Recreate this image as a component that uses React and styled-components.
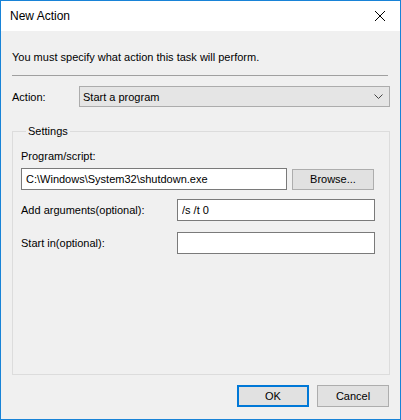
import React from "react";
import styled, { createGlobalStyle } from "styled-components";

const GlobalStyle = createGlobalStyle`
  html, body {
    margin: 0;
    padding: 0;
    background: #ffffff;
  }
  body {
    font-family: "Liberation Sans", Arial, sans-serif;
    font-size: 11px;
    color: #000000;
  }
`;

const Window = styled.div`
  box-sizing: border-box;
  width: 401px;
  height: 420px;
  border: 1px solid #1883d7;
  background: #f0f0f0;
  display: flex;
  flex-direction: column;
`;

const TitleBar = styled.div`
  height: 30px;
  flex-shrink: 0;
  background: #ffffff;
  display: flex;
  align-items: center;
  justify-content: space-between;
  padding: 0 10px 0 9px;
`;

const Title = styled.span`
  font-size: 12px;
  margin-top: -1px;
`;

const CloseGlyph = styled.svg`
  width: 10px;
  height: 10px;
  margin-right: 5px;
`;

const Body = styled.div`
  flex: 1;
  display: flex;
  flex-direction: column;
  padding: 0 10px 0 11px;
`;

const Intro = styled.div`
  line-height: 16px;
  margin-top: 18px;
`;

const Separator = styled.div`
  height: 1px;
  background: #a0a0a0;
  margin: 10px 2px 0 0;
`;

const FieldRow = styled.div`
  display: flex;
  align-items: center;
  margin-top: ${p => p.$top || 0}px;
`;

const Label = styled.span`
  width: ${p => p.$width}px;
  flex-shrink: 0;
  line-height: 16px;
`;

const Combo = styled.div`
  box-sizing: border-box;
  flex: 1;
  height: 21px;
  display: flex;
  align-items: center;
  justify-content: space-between;
  padding: 0 6px 0 3px;
  background: #e5e5e5;
  border: 1px solid #acacac;
`;

const Chevron = styled.svg`
  width: 9px;
  height: 5px;
`;

const GroupBox = styled.fieldset`
  box-sizing: border-box;
  height: 252px;
  margin: 16px 0 0 0;
  padding: 0 14px 0 8px;
  border: 1px solid #dcdcdc;
  display: flex;
  flex-direction: column;
`;

const Legend = styled.legend`
  padding: 0 2px;
  margin-left: 5px;
  line-height: 16px;
`;

const GroupLabel = styled.div`
  line-height: 16px;
  margin-top: 9px;
`;

const TextBox = styled.input`
  box-sizing: border-box;
  width: ${p => p.$width}px;
  height: 22px;
  border: 1px solid #7a7a7a;
  background: #ffffff;
  padding: 0 4px;
  font: inherit;
  color: #000000;
  outline: none;
`;

const Button = styled.button`
  box-sizing: border-box;
  width: ${p => p.$width || 72}px;
  height: ${p => p.$height || 22}px;
  margin-left: ${p => p.$gap || 0}px;
  padding: 0;
  background: #e1e1e1;
  border: ${p => (p.$default ? "2px solid #0078d7" : "1px solid #adadad")};
  font: inherit;
  color: #000000;
`;

const ButtonBar = styled.div`
  display: flex;
  justify-content: flex-end;
  gap: 8px;
  margin: 10px 1px 0 0;
`;

export default function App() {
  return (
    <>
      <GlobalStyle />
      <Window>
        <TitleBar>
          <Title>New Action</Title>
          <CloseGlyph viewBox="0 0 10 10">
            <path d="M0 0 L10 10 M10 0 L0 10" stroke="#000" strokeWidth="1" />
          </CloseGlyph>
        </TitleBar>
        <Body>
          <Intro>You must specify what action this task will perform.</Intro>
          <Separator />
          <FieldRow $top={10}>
            <Label $width={67}>Action:</Label>
            <Combo>
              <span>Start a program</span>
              <Chevron viewBox="0 0 9 5">
                <path d="M0.5 0.5 L4.5 4.5 L8.5 0.5" fill="none" stroke="#444" strokeWidth="1" />
              </Chevron>
            </Combo>
          </FieldRow>
          <GroupBox>
            <Legend>Settings</Legend>
            <GroupLabel>Program/script:</GroupLabel>
            <FieldRow $top={4}>
              <TextBox $width={266} readOnly value="C:\Windows\System32\shutdown.exe" />
              <Button type="button" $width={82} $height={21} $gap={5}>
                Browse...
              </Button>
            </FieldRow>
            <FieldRow $top={9}>
              <Label $width={156}>Add arguments(optional):</Label>
              <TextBox $width={198} readOnly value="/s /t 0" />
            </FieldRow>
            <FieldRow $top={11}>
              <Label $width={156}>Start in(optional):</Label>
              <TextBox $width={198} readOnly value="" />
            </FieldRow>
          </GroupBox>
          <ButtonBar>
            <Button type="button" $default>OK</Button>
            <Button type="button">Cancel</Button>
          </ButtonBar>
        </Body>
      </Window>
    </>
  );
}
